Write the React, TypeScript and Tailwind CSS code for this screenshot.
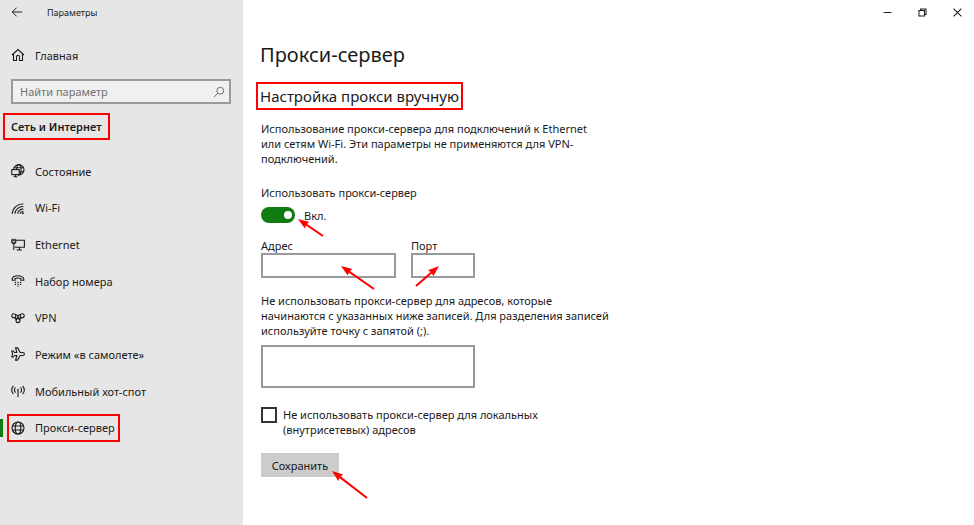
import React, { useState } from "react";
import clsx from "clsx";

interface IconProps {
  children: React.ReactNode;
  className?: string;
}

function Icon({ children, className = "size-[14px]" }: IconProps) {
  return (
    <svg
      viewBox="0 0 14 14"
      fill="none"
      stroke="currentColor"
      strokeWidth="1.1"
      className={clsx("shrink-0", className)}
      aria-hidden="true"
    >
      {children}
    </svg>
  );
}

const statusIcon = (
  <Icon>
    <circle cx="7.8" cy="5.8" r="5.2" />
    <ellipse cx="7.8" cy="5.8" rx="2.3" ry="5.2" />
    <path d="M3.2 3.8h9.4M3.2 7.8h9.4" />
    <rect x=".8" y="5.6" width="7.4" height="5" fill="#e6e6e6" />
    <path d="M4.5 10.6v2.2M2.6 12.8h3.8" />
  </Icon>
);

const wifiIcon = (
  <Icon>
    <path d="M1.2 12.8A10.4 10.4 0 0 1 12.4 3M4 12.8a7.8 7.8 0 0 1 8.4-7.2M6.6 12.8a5.2 5.2 0 0 1 5.8-4.6" />
    <path d="M9 12.8a3 3 0 0 1 3.4-2.2" />
    <circle cx="11.8" cy="12.2" r="1" fill="currentColor" stroke="none" />
  </Icon>
);

const ethernetIcon = (
  <Icon>
    <path d="M5 2.2h8.4v7H3.6M8.4 9.2v2.6M5.6 12h5.4" />
    <path d="M.8 2h4v2.2l-1 1.2H1.8l-1-1.2z" fill="currentColor" fillOpacity=".35" />
    <path d="M1.6.8V2M4 .8V2M2.8 5.4V12" />
  </Icon>
);

const dialIcon = (
  <Icon>
    <path d="M1.2 5.2c0-4.6 11.6-4.6 11.6 0v1.1H9.9V4.6C8.4 4 5.6 4 4.1 4.6v1.7H1.2z" />
    <path d="M3.8 8.4H5M6.4 8.4h1.2M9 8.4h1.2M3.8 10.4H5M6.4 10.4h1.2M9 10.4h1.2M6.4 12.2h1.2" />
  </Icon>
);

const vpnIcon = (
  <Icon>
    <circle cx="2.8" cy="4.8" r="2" />
    <circle cx="11.2" cy="4.8" r="2" />
    <circle cx="7" cy="9.6" r="2" />
    <path d="M4.4 3.6C6 3 7 5 8.7 8.4M3.6 6.6l1.7 2M9.6 3.6C8 3 7 5 5.3 8.4M10.4 6.6l-1.7 2" />
  </Icon>
);

const planeIcon = (
  <Icon>
    <path d="M13.4 7c0-.9-.8-1.5-1.8-1.5H9.2L6.6.9H4.6l1.2 4.6H3.6L2.4 4H.8l.8 3-.8 3h1.6l1.2-1.5h2.2l-1.2 4.6h2l2.6-4.6h2.4c1 0 1.8-.6 1.8-1.5z" />
  </Icon>
);

const hotspotIcon = (
  <Icon>
    <path d="M2.4 1.8a6.6 6.6 0 0 0 0 8.4M11.6 1.8a6.6 6.6 0 0 1 0 8.4M4.5 3.4a4 4 0 0 0 0 5.2M9.5 3.4a4 4 0 0 1 0 5.2M7 6v7" />
    <circle cx="7" cy="5.6" r=".8" fill="currentColor" stroke="none" />
  </Icon>
);

const globeIcon = (
  <Icon>
    <circle cx="7" cy="7" r="6" />
    <ellipse cx="7" cy="7" rx="2.8" ry="6" />
    <path d="M1.5 5h11M1.5 9h11" />
  </Icon>
);

const navItems = [
  { id: "status", label: "Состояние", icon: statusIcon },
  { id: "wifi", label: "Wi-Fi", icon: wifiIcon },
  { id: "ethernet", label: "Ethernet", icon: ethernetIcon },
  { id: "dial", label: "Набор номера", icon: dialIcon },
  { id: "vpn", label: "VPN", icon: vpnIcon },
  { id: "plane", label: "Режим «в самолете»", icon: planeIcon },
  { id: "hotspot", label: "Мобильный хот-спот", icon: hotspotIcon },
  { id: "proxy", label: "Прокси-сервер", icon: globeIcon },
];

interface ArrowProps {
  width: number;
  height: number;
  flip?: boolean;
  className?: string;
}

// Pointer with its tip in the top left corner, or top right when flipped
function Arrow({ width, height, flip = false, className }: ArrowProps) {
  const tipX = flip ? width : 0;
  const tailX = flip ? 0 : width;
  const angle = (Math.atan2(height, tailX - tipX) * 180) / Math.PI;
  return (
    <svg
      width={width}
      height={height}
      className={clsx("absolute overflow-visible pointer-events-none", className)}
      aria-hidden="true"
    >
      <line
        x1={tipX + (tailX - tipX) * 0.2}
        y1={height * 0.2}
        x2={tailX}
        y2={height}
        stroke="#ff0000"
        strokeWidth="2"
      />
      <path
        d="M0 0L11 -4L10 0L11 4Z"
        fill="#ff0000"
        transform={`translate(${tipX} 0) rotate(${angle})`}
      />
    </svg>
  );
}

function Sidebar() {
  const [active, setActive] = useState("proxy");

  return (
    <aside className="w-[243px] shrink-0 bg-[#e6e6e6]">
      <div className="flex h-6 items-center gap-6 pl-[11px]">
        <button type="button" aria-label="Назад">
          <Icon className="size-3">
            <path d="M13 7H1.5M6.5 2L1.5 7l5 5" />
          </Icon>
        </button>
        <span className="text-[9px]">Параметры</span>
      </div>

      <a href="#home" className="mt-[19px] flex h-6 items-center gap-2.5 pl-[11px]">
        <Icon>
          <path d="M1 7L7 1.5 13 7M2.5 6v6.5h3V8.8a1.5 1.5 0 0 1 3 0v3.7h3V6" />
        </Icon>
        Главная
      </a>

      <div className="mx-[11px] mt-3 flex h-[25px] w-[220px] items-center border-2 border-[#999999] bg-[#f0f0f0] pr-1 pl-[7px]">
        <input
          type="text"
          aria-label="Найти параметр"
          placeholder="Найти параметр"
          className="min-w-0 flex-1 outline-none placeholder:text-[#707070]"
        />
        <Icon className="size-3 text-[#666666]">
          <circle cx="8.5" cy="5.5" r="4" />
          <path d="M5.6 8.4L1 13" />
        </Icon>
      </div>

      <h2 className="mt-[9px] ml-[3px] flex h-[27px] w-fit items-center border-2 border-[#ff0000] px-1.5 font-semibold">
        Сеть и Интернет
      </h2>

      <nav className="mt-[13px] grid h-[293px] auto-rows-fr">
        {navItems.map((item) => (
          <a
            key={item.id}
            href={`#${item.id}`}
            onClick={() => setActive(item.id)}
            className="flex items-center"
          >
            <span
              className={clsx(
                "h-[18px] w-[3px]",
                active === item.id && "bg-[#107c10]"
              )}
            />
            <span
              className={clsx(
                "ml-1 flex h-7 items-center gap-2.5 border-2 pr-[3px] pl-0.5",
                item.id === "proxy" ? "border-[#ff0000]" : "border-transparent"
              )}
            >
              {item.icon}
              {item.label}
            </span>
          </a>
        ))}
      </nav>
    </aside>
  );
}

function WindowControls() {
  return (
    <div className="flex h-6 items-center justify-end gap-6 pr-[11px]">
      <button type="button" aria-label="Свернуть">
        <Icon className="size-[11px]">
          <path d="M2 7h10" strokeWidth="1.3" />
        </Icon>
      </button>
      <button type="button" aria-label="Свернуть в окно">
        <Icon className="size-[11px]">
          <path d="M2.5 4.5h7v7h-7zM4.5 4.5v-2h7v7h-2" strokeWidth="1.3" />
        </Icon>
      </button>
      <button type="button" aria-label="Закрыть">
        <Icon className="size-[11px]">
          <path d="M2 2l10 10M12 2L2 12" strokeWidth="1.3" />
        </Icon>
      </button>
    </div>
  );
}

function ProxyForm() {
  const [enabled, setEnabled] = useState(true);

  return (
    <form onSubmit={(e) => e.preventDefault()} className="pl-[18px]">
      <h1 className="mt-4 -ml-px text-xl leading-[30px]">Прокси-сервер</h1>

      <h2 className="mt-3 -ml-[5px] flex h-7 w-fit items-center border-2 border-[#ff0000] px-0.5 text-[15px]">
        Настройка прокси вручную
      </h2>

      <p className="mt-[11px] max-w-[340px]">
        Использование прокси-сервера для подключений к Ethernet
        <br />
        или сетям Wi-Fi. Эти параметры не применяются для VPN-
        <br />
        подключений.
      </p>

      <p id="use-proxy" className="mt-[19px]">
        Использовать прокси-сервер
      </p>
      <div className="relative mt-[7px] flex h-4 w-fit items-center gap-[9px]">
        <button
          type="button"
          role="switch"
          aria-checked={enabled}
          aria-labelledby="use-proxy"
          onClick={() => setEnabled(!enabled)}
          className={clsx(
            "flex h-4 w-[34px] items-center rounded-full px-[3px]",
            enabled ? "justify-end bg-[#107c10]" : "justify-start bg-[#999999]"
          )}
        >
          <span className="size-2 rounded-full bg-white" />
        </button>
        <span>{enabled ? "Вкл." : "Откл."}</span>
        <Arrow width={25} height={17} className="top-3 left-[37px]" />
      </div>

      <div className="mt-[15px] flex gap-[15px]">
        <div className="relative">
          <label htmlFor="address" className="block">
            Адрес
          </label>
          <input
            id="address"
            type="text"
            className="block h-[25px] w-[135px] border-2 border-[#999999] bg-white px-1.5 outline-none"
          />
          <Arrow width={33} height={23} className="top-7 left-20" />
        </div>
        <div className="relative">
          <label htmlFor="port" className="block">
            Порт
          </label>
          <input
            id="port"
            type="text"
            className="block h-[25px] w-16 border-2 border-[#999999] bg-white px-1.5 outline-none"
          />
          <Arrow width={23} height={20} flip className="top-7 left-[5px]" />
        </div>
      </div>

      <label htmlFor="exceptions" className="mt-[15px] block max-w-[360px]">
        Не использовать прокси-сервер для адресов, которые
        <br />
        начинаются с указанных ниже записей. Для разделения записей
        <br />
        используйте точку с запятой (;).
      </label>
      <textarea
        id="exceptions"
        className="mt-[7px] block h-[43px] w-[214px] resize-none border-2 border-[#999999] bg-white px-1.5 outline-none"
      />

      <label className="mt-[19px] flex max-w-[300px] items-start gap-[6px]">
        <input
          type="checkbox"
          className="size-4 shrink-0 appearance-none border-2 border-[#333333] bg-white checked:bg-[#107c10]"
        />
        <span>
          Не использовать прокси-сервер для локальных
          <br />
          (внутрисетевых) адресов
        </span>
      </label>

      <div className="relative mt-4 w-fit">
        <button
          type="submit"
          className="block h-6 w-[78px] bg-[#cccccc] text-center"
        >
          Сохранить
        </button>
        <Arrow width={35} height={27} className="top-[18px] left-[71px]" />
      </div>
    </form>
  );
}

export default function App() {
  return (
    <div className="flex min-h-screen bg-white font-['Noto_Sans','Open_Sans',sans-serif] text-[11px] leading-[15px] text-[#1a1a1a]">
      <Sidebar />
      <main className="min-w-0 flex-1">
        <WindowControls />
        <ProxyForm />
      </main>
    </div>
  );
}
